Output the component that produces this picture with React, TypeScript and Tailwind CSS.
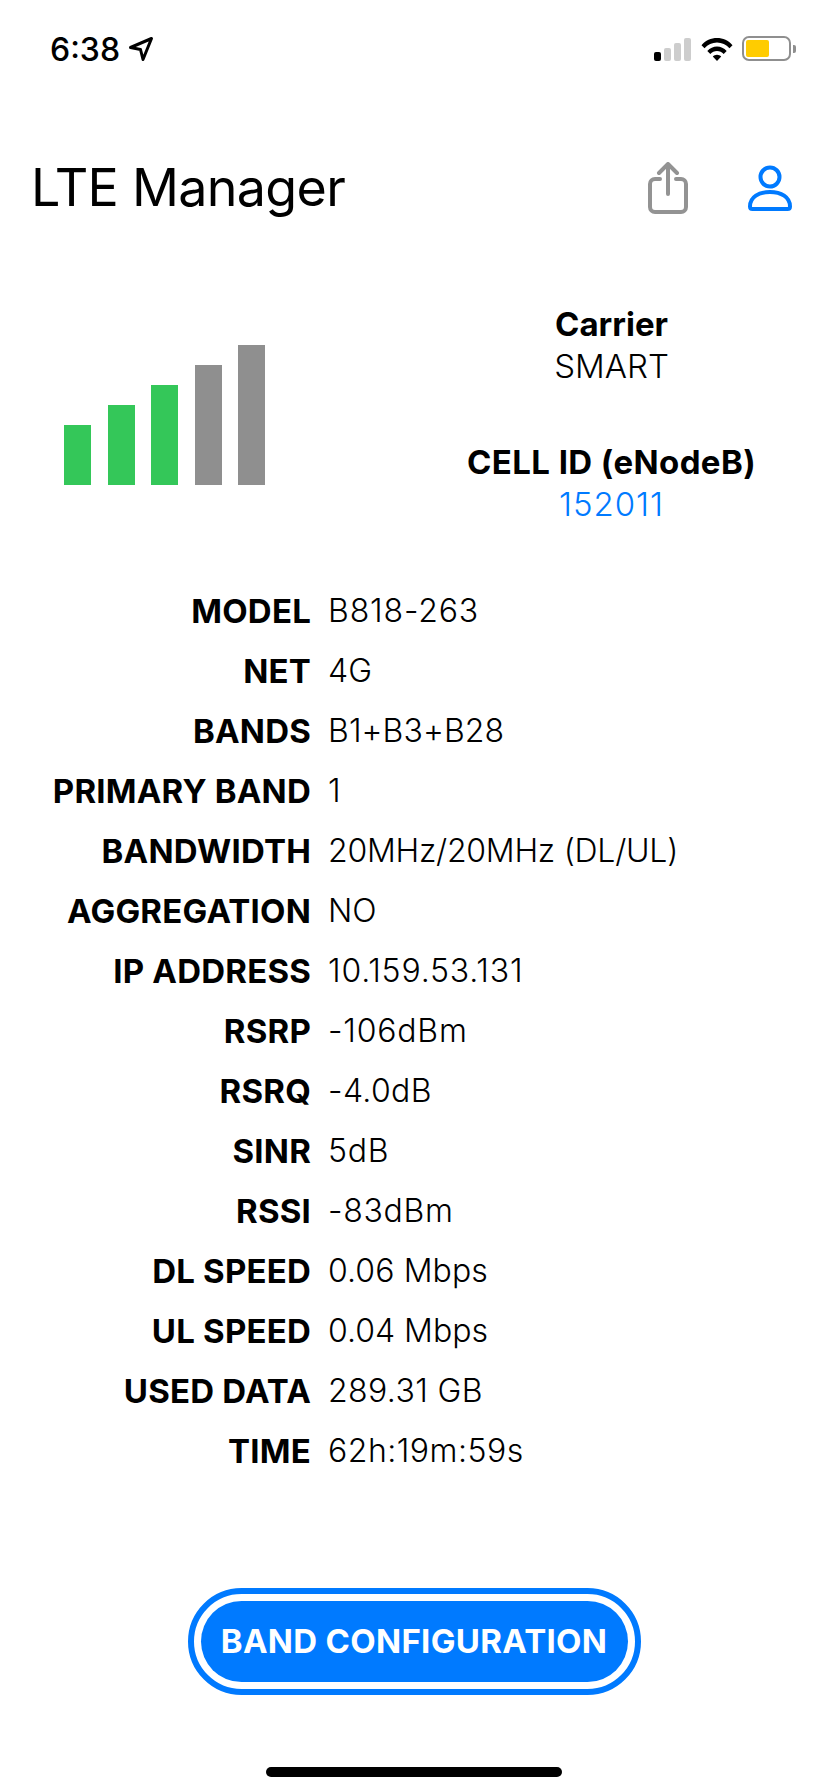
import React from "react";

const rows: [string, string, string][] = [
  ["MODEL", "B818-263", "tracking-[0.85px]"],
  ["NET", "4G", "tracking-[0px]"],
  ["BANDS", "B1+B3+B28", "tracking-[0.1px]"],
  ["PRIMARY BAND", "1", "tracking-[0px]"],
  ["BANDWIDTH", "20MHz/20MHz (DL/UL)", "tracking-[-0.25px]"],
  ["AGGREGATION", "NO", "tracking-[0px]"],
  ["IP ADDRESS", "10.159.53.131", "tracking-[0.8px]"],
  ["RSRP", "-106dBm", "tracking-[0.8px]"],
  ["RSRQ", "-4.0dB", "tracking-[0.4px]"],
  ["SINR", "5dB", "tracking-[0.7px]"],
  ["RSSI", "-83dBm", "tracking-[0.7px]"],
  ["DL SPEED", "0.06 Mbps", "tracking-[0.1px]"],
  ["UL SPEED", "0.04 Mbps", "tracking-[0px]"],
  ["USED DATA", "289.31 GB", "tracking-[0.4px]"],
  ["TIME", "62h:19m:59s", "tracking-[0.5px]"],
];

function StatusIcons() {
  return (
    <div className="flex items-center">
      <div className="flex items-end gap-[3px] h-[24px] w-[37px]">
        <div className="w-[7px] h-[9px] rounded-[2px] bg-black" />
        <div className="w-[7px] h-[13px] rounded-[2px] bg-[#cdcdcd]" />
        <div className="w-[7px] h-[18px] rounded-[2px] bg-[#cdcdcd]" />
        <div className="w-[7px] h-[23px] rounded-[2px] bg-[#cdcdcd]" />
      </div>
      <svg width="32" height="24" viewBox="0 0 32 24" className="ml-[10px]">
        <path d="M0.5 8.2C4.5 3.4 10 1 16 1s11.5 2.4 15.5 7.2l-3 3C25.2 7.5 20.8 5.4 16 5.4S6.8 7.500 3.500 11.200z" fill="#000" />
        <path d="M6.300 14C9 11 12.300 9.500 16 9.500S23 11 25.700 14l-3 3C20.900 15 18.600 13.900 16 13.900s-4.900 1.100-6.700 3.100z" fill="#000" />
        <path d="M11.800 19.500c1.100-1.100 2.600-1.800 4.200-1.800s3.100.7 4.200 1.800L16 24z" fill="#000" />
      </svg>
      <div className="ml-[9px] w-[49px] h-[25px] rounded-[7px] border-2 border-[#8f8f8f] p-[2px] flex">
        <div className="w-[23px] h-full rounded-[2px] bg-[#ffcc00]" />
      </div>
      <div className="ml-[2px] w-[3px] h-[8px] rounded-r-[2px] bg-[#8f8f8f]" />
    </div>
  );
}

export default function App() {
  return (
    <div className="w-[828px] h-[1792px] bg-white text-black overflow-hidden font-['Inter','Liberation_Sans',sans-serif]">
      <div className="h-[88px] flex items-start justify-between pl-[50px] pr-[32px] pt-[36px]">
        <div className="flex items-center h-[26px]">
          <span className="text-[32px] leading-[26px] font-medium mt-[1px]">6:38</span>
          <svg width="26" height="26" viewBox="0 0 26 26" className="ml-[8px]">
            <path d="M2.500 11.500L23.500 2.500L15 23.500L12.500 13.500z" fill="none" stroke="#000" strokeWidth="3" strokeLinejoin="round" />
          </svg>
        </div>
        <StatusIcons />
      </div>

      <div className="mt-[60px] h-[80px] flex items-center justify-between pl-[31px] pr-[36px]">
        <h1 className="text-[52px] leading-[60px] font-normal tracking-[-0.7px]">LTE Manager</h1>
        <div className="flex items-center gap-[60px]">
          <svg width="40" height="52" viewBox="0 0 40 52" fill="none" stroke="#939393" strokeWidth="4" strokeLinecap="round" strokeLinejoin="round">
            <path d="M12 17H7a5 5 0 0 0-5 5v23a5 5 0 0 0 5 5h26a5 5 0 0 0 5-5V22a5 5 0 0 0-5-5h-5" />
            <path d="M20 32V3M11 11l9-9 9 9" />
          </svg>
          <svg width="44" height="46" viewBox="0 0 44 46" fill="none" stroke="#007aff" strokeWidth="4" strokeLinejoin="round">
            <circle cx="22" cy="12" r="9.500" />
            <path d="M2 41.500C2 32 11 27 22 27s20 5 20 14.500c0 1.500-1 2.500-2.500 2.500h-35C3 44 2 43 2 41.500z" />
          </svg>
        </div>
      </div>

      <div className="mt-[75px] flex items-start justify-between pl-[64px] pr-[72px] h-[222px]">
        <div className="flex items-end gap-[16.500px] mt-[42px]">
          <div className="w-[27px] h-[60px] bg-[#34c759]" />
          <div className="w-[27px] h-[80px] bg-[#34c759]" />
          <div className="w-[27px] h-[100px] bg-[#34c759]" />
          <div className="w-[27px] h-[120px] bg-[#8f8f8f]" />
          <div className="w-[27px] h-[140px] bg-[#8f8f8f]" />
        </div>
        <div className="flex flex-col items-center text-[33px] leading-[42px]">
          <div className="font-bold">Carrier</div>
          <div className="font-light">SMART</div>
          <div className="font-bold mt-[54px] tracking-[0.4px]">CELL ID (eNodeB)</div>
          <div className="font-light text-[#007aff] tracking-[1px]">152011</div>
        </div>
      </div>

      <div className="mt-[56px] grid grid-cols-[311px_1fr] gap-x-[17px] text-[32px] leading-[60px]">
        {rows.map(([k, v, t]) => (
          <React.Fragment key={k}>
            <div className="text-right font-bold text-[33px] tracking-[0.2px] h-[60px] whitespace-nowrap">{k}</div>
            <div className={`font-light h-[60px] ${t}`}>{v}</div>
          </React.Fragment>
        ))}
      </div>

      <div className="mt-[107px] flex justify-center">
        <button className="w-[453px] h-[107px] rounded-full border-[6px] border-[#007aff] p-[7px] bg-white">
          <span className="flex items-center justify-center w-full h-full rounded-full bg-[#007aff] text-white text-[33px] font-bold tracking-[0.3px] whitespace-nowrap">
            BAND CONFIGURATION
          </span>
        </button>
      </div>

      <div className="mt-[72px] flex justify-center">
        <div className="w-[296px] h-[10px] rounded-full bg-black" />
      </div>
    </div>
  );
}
